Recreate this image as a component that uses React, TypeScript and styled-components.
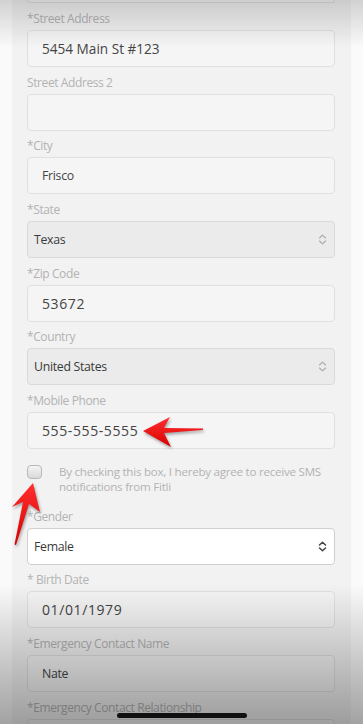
import React from 'react';
import styled, { createGlobalStyle } from 'styled-components';

const GlobalStyle = createGlobalStyle`
  html, body {
    margin: 0;
    padding: 0;
    background: #fafafa;
    overflow: hidden;
  }
  body {
    font-family: 'Open Sans', 'Liberation Sans', sans-serif;
  }
`;

const Screen = styled.div`
  position: relative;
  width: 363px;
  height: 724px;
  overflow: hidden;
  background: #fafafa;
`;

const Card = styled.div`
  margin: 0 12px;
  padding: 0 16px 0 15px;
  background: #f2f2f2;
  display: flex;
  flex-direction: column;
`;

// bottom edge of the field above, scrolled mostly out of view
const CutInput = styled.div`
  box-sizing: border-box;
  height: 3px;
  margin-bottom: 8px;
  border: 1px solid #e0e0e0;
  border-top: none;
  border-radius: 0 0 4px 4px;
  background: #f5f5f5;
`;

const Field = styled.div`
  display: flex;
  flex-direction: column;
  gap: 3px;
  margin-bottom: 7.67px;
`;

const Label = styled.label`
  font-size: 12px;
  line-height: 16px;
  color: #b3b3b3;
  letter-spacing: -0.4px;
`;

type Size = 'normal' | 'mid' | 'wide';

const fontFor: Record<Size, string> = {
  normal: 'font-size: 12.3px; letter-spacing: -0.3px;',
  mid: 'font-size: 13.6px; letter-spacing: 0;',
  wide: 'font-size: 14px; letter-spacing: 0.6px;',
};

const Input = styled.div<{ $size: Size }>`
  box-sizing: border-box;
  height: 37px;
  display: flex;
  align-items: center;
  padding: 0 14px;
  border: 1px solid #e0e0e0;
  border-radius: 4px;
  background: #f5f5f5;
  ${({ $size }) => fontFor[$size]}
  color: #444;
`;

const Select = styled.div<{ $active?: boolean }>`
  box-sizing: border-box;
  height: 37px;
  display: flex;
  align-items: center;
  justify-content: space-between;
  padding: 0 7px 0 6px;
  border: 1px solid ${({ $active }) => ($active ? '#cfcfcf' : '#d9d9d9')};
  border-radius: 4px;
  background: ${({ $active }) => ($active ? '#ffffff' : '#ebebeb')};
  font-size: 12.3px;
  letter-spacing: -0.3px;
  color: #3a3a3a;
`;

const Consent = styled.div`
  display: flex;
  align-items: flex-start;
  gap: 17px;
  padding: 7px 0 15px;
`;

const Box = styled.span`
  flex: none;
  box-sizing: border-box;
  width: 15px;
  height: 14px;
  margin-top: 1px;
  border: 1px solid #b8b8b8;
  border-radius: 4px;
  background: linear-gradient(#f4f4f4, #d9d9d9);
`;

const ConsentText = styled.p`
  margin: 0;
  font-size: 11.6px;
  line-height: 15px;
  letter-spacing: -0.25px;
  color: #b3b3b3;
`;

const TopShade = styled.div`
  position: absolute;
  left: 0;
  right: 0;
  top: 0;
  height: 48px;
  background: linear-gradient(rgba(0, 0, 0, 0.16), rgba(0, 0, 0, 0));
  pointer-events: none;
`;

const BottomShade = styled.div`
  position: absolute;
  left: 0;
  right: 0;
  bottom: 0;
  height: 140px;
  background: linear-gradient(rgba(0, 0, 0, 0), rgba(0, 0, 0, 0.25) 70%, rgba(0, 0, 0, 0.35));
  pointer-events: none;
`;

const HomeBar = styled.div`
  position: absolute;
  left: 117px;
  top: 713px;
  width: 130px;
  height: 5px;
  border-radius: 3px;
  background: #111;
`;

const Arrow = styled.svg`
  position: absolute;
  overflow: visible;
  pointer-events: none;
`;

const Chevrons = ({ dark }: { dark?: boolean }) => (
  <svg width="9" height="11" viewBox="0 0 9 11" fill="none">
    <path
      d="M1.5 4 L4.5 1.2 L7.5 4 M1.5 7 L4.5 9.8 L7.5 7"
      stroke={dark ? '#444' : '#aaa'}
      strokeWidth={dark ? 1.5 : 1.1}
      strokeLinecap="round"
      strokeLinejoin="round"
    />
  </svg>
);

type FieldData = { label: string; value?: string; kind?: 'select' | 'active'; size?: Size };

const upper: FieldData[] = [
  { label: '*Street Address', value: '5454 Main St #123', size: 'mid' },
  { label: 'Street Address 2', value: '' },
  { label: '*City', value: 'Frisco' },
  { label: '*State', value: 'Texas', kind: 'select' },
  { label: '*Zip Code', value: '53672', size: 'wide' },
  { label: '*Country', value: 'United States', kind: 'select' },
  { label: '*Mobile Phone', value: '555-555-5555', size: 'wide' },
];

const lower: FieldData[] = [
  { label: '*Gender', value: 'Female', kind: 'active' },
  { label: '* Birth Date', value: '01/01/1979', size: 'wide' },
  { label: '*Emergency Contact Name', value: 'Nate' },
  { label: '*Emergency Contact Relationship', value: '' },
];

const renderField = (f: FieldData) => (
  <Field key={f.label}>
    <Label>{f.label}</Label>
    {f.kind ? (
      <Select $active={f.kind === 'active'}>
        <span>{f.value}</span>
        <Chevrons dark={f.kind === 'active'} />
      </Select>
    ) : (
      <Input $size={f.size ?? 'normal'}>{f.value}</Input>
    )}
  </Field>
);

export default function App() {
  return (
    <Screen>
      <GlobalStyle />
      <Card>
        <CutInput />
        {upper.map(renderField)}
        <Consent>
          <Box />
          <ConsentText>
            By checking this box, I hereby agree to receive SMS notifications from Fitli
          </ConsentText>
        </Consent>
        {lower.map(renderField)}
      </Card>

      <Arrow style={{ left: 141, top: 414 }} width="64" height="36" viewBox="0 0 64 36">
        <defs>
          <linearGradient id="redA" x1="0" y1="0" x2="0" y2="1">
            <stop offset="0" stopColor="#ff3030" />
            <stop offset="1" stopColor="#d80000" />
          </linearGradient>
        </defs>
        <path
          d="M2 17 L29 3 L23 14 L62 14.5 L62 16 L23 19 L30 33 Z"
          fill="url(#redA)"
          style={{ filter: 'drop-shadow(1px 2px 1.5px rgba(0,0,0,0.35))' }}
        />
      </Arrow>
      <Arrow style={{ left: 8, top: 481 }} width="36" height="66" viewBox="0 0 36 66">
        <path
          d="M25 2 L32 31 L21 23 L8 64 L6.5 63.5 L15 21 L4 26 Z"
          fill="url(#redA)"
          style={{ filter: 'drop-shadow(1px 2px 1.5px rgba(0,0,0,0.35))' }}
        />
      </Arrow>

      <TopShade />
      <BottomShade />
      <HomeBar />
    </Screen>
  );
}
